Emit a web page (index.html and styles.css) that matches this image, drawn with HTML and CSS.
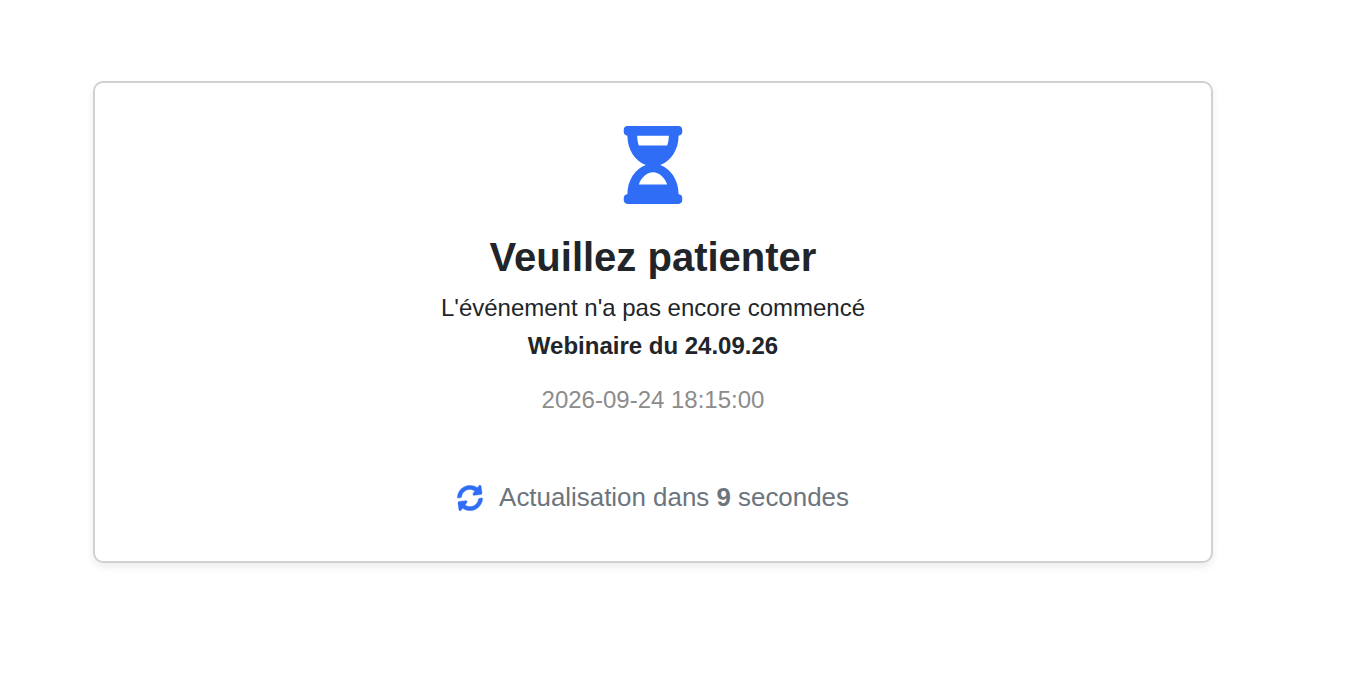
FILE: index.html
```html
<!DOCTYPE html>
<html lang="fr">
  <head>
    <meta charset="UTF-8" />
    <title>Veuillez patienter</title>
    <link rel="stylesheet" href="styles.css">
  </head>
  <body>
    <main class="card">
      <svg class="hourglass" viewBox="0 0 384 512" aria-hidden="true">
        <path d="M360 0H24C10.745 0 0 10.745 0 24v16c0 13.255 10.745 24 24 24 0 90.965 51.016 167.734 120.842 192C75.016 280.266 24 357.035 24 448c-13.255 0-24 10.745-24 24v16c0 13.255 10.745 24 24 24h336c13.255 0 24-10.745 24-24v-16c0-13.255-10.745-24-24-24 0-90.965-51.016-167.734-120.842-192C308.984 231.734 360 154.965 360 64c13.255 0 24-10.745 24-24V24c0-13.255-10.745-24-24-24zm-75.078 384H99.08c17.059-46.797 52.096-80 92.92-80 40.821 0 75.862 33.196 92.922 80zm.019-256H99.078C91.988 108.548 88 86.748 88 64h208c0 22.805-3.987 44.587-11.059 64z" />
      </svg>

      <h1 class="title">Veuillez patienter</h1>
      <p class="message">L'événement n'a pas encore commencé</p>
      <p class="event">Webinaire du 24.09.26</p>
      <p class="date">2026-09-24 18:15:00</p>

      <div class="refresh">
        <svg class="sync" viewBox="0 0 512 512" aria-hidden="true">
          <path d="M370.72 133.28C339.458 104.008 298.888 87.962 255.848 88c-77.458.068-144.328 53.178-162.791 126.85-1.344 5.363-6.122 9.15-11.651 9.15H24.103c-7.498 0-13.194-6.807-11.807-14.176C33.933 94.924 134.813 8 256 8c66.448 0 126.791 26.136 171.315 68.685L463.03 40.97C478.149 25.851 504 36.559 504 57.941V192c0 13.255-10.745 24-24 24H345.941c-21.382 0-32.09-25.851-16.971-40.971l41.75-41.749zM32 296h134.059c21.382 0 32.09 25.851 16.971 40.971l-41.75 41.75c31.262 29.273 71.835 45.319 114.876 45.28 77.418-.07 144.315-53.144 162.787-126.849 1.344-5.363 6.122-9.15 11.651-9.15h57.304c7.498 0 13.194 6.807 11.807 14.176C478.067 417.076 377.187 504 256 504c-66.448 0-126.791-26.136-171.315-68.685L48.97 471.03C33.851 486.149 8 475.441 8 454.059V320c0-13.255 10.745-24 24-24z" />
        </svg>
        <span>Actualisation dans <strong>9</strong> secondes</span>
      </div>
    </main>
  </body>
</html>
```

FILE: styles.css
```css
body {
  min-height: 100vh;
  box-sizing: border-box;
  margin: 0;
  padding: 81px 0 0 93px;
  background-color: #fff;
  color: #212529;
  font-family: "Liberation Sans", Arial, sans-serif;
}
.card {
  display: flex;
  flex-direction: column;
  align-items: center;
  box-sizing: border-box;
  width: 1120px;
  height: 482px;
  padding-top: 43px;
  border: 2px solid #d1d1d3;
  border-radius: 10px;
  box-shadow: 0 4px 8px rgba(0, 0, 0, 0.075);
}
.card svg {
  display: block;
  fill: #2f6df6;
}
.hourglass {
  width: 60px;
  height: 78px;
}
.title {
  margin: 29px 0 0;
  font-size: 40px;
  line-height: 48px;
}
.message,
.event,
.date {
  margin: 0;
  font-size: 24px;
  line-height: 38px;
}
.message {
  margin-top: 8px;
}
.event {
  font-weight: bold;
}
.date {
  margin-top: 16px;
  color: #8c8c8c;
}
.refresh {
  display: flex;
  align-items: center;
  margin-top: 59px;
  color: #6c757d;
  font-size: 25.9px;
  line-height: 38px;
}
.sync {
  width: 26px;
  height: 26px;
  margin: 1px 16px 0 0;
  overflow: visible;
  stroke: #2f6df6;
  stroke-width: 8;
  transform: rotate(-8deg);
}
```
